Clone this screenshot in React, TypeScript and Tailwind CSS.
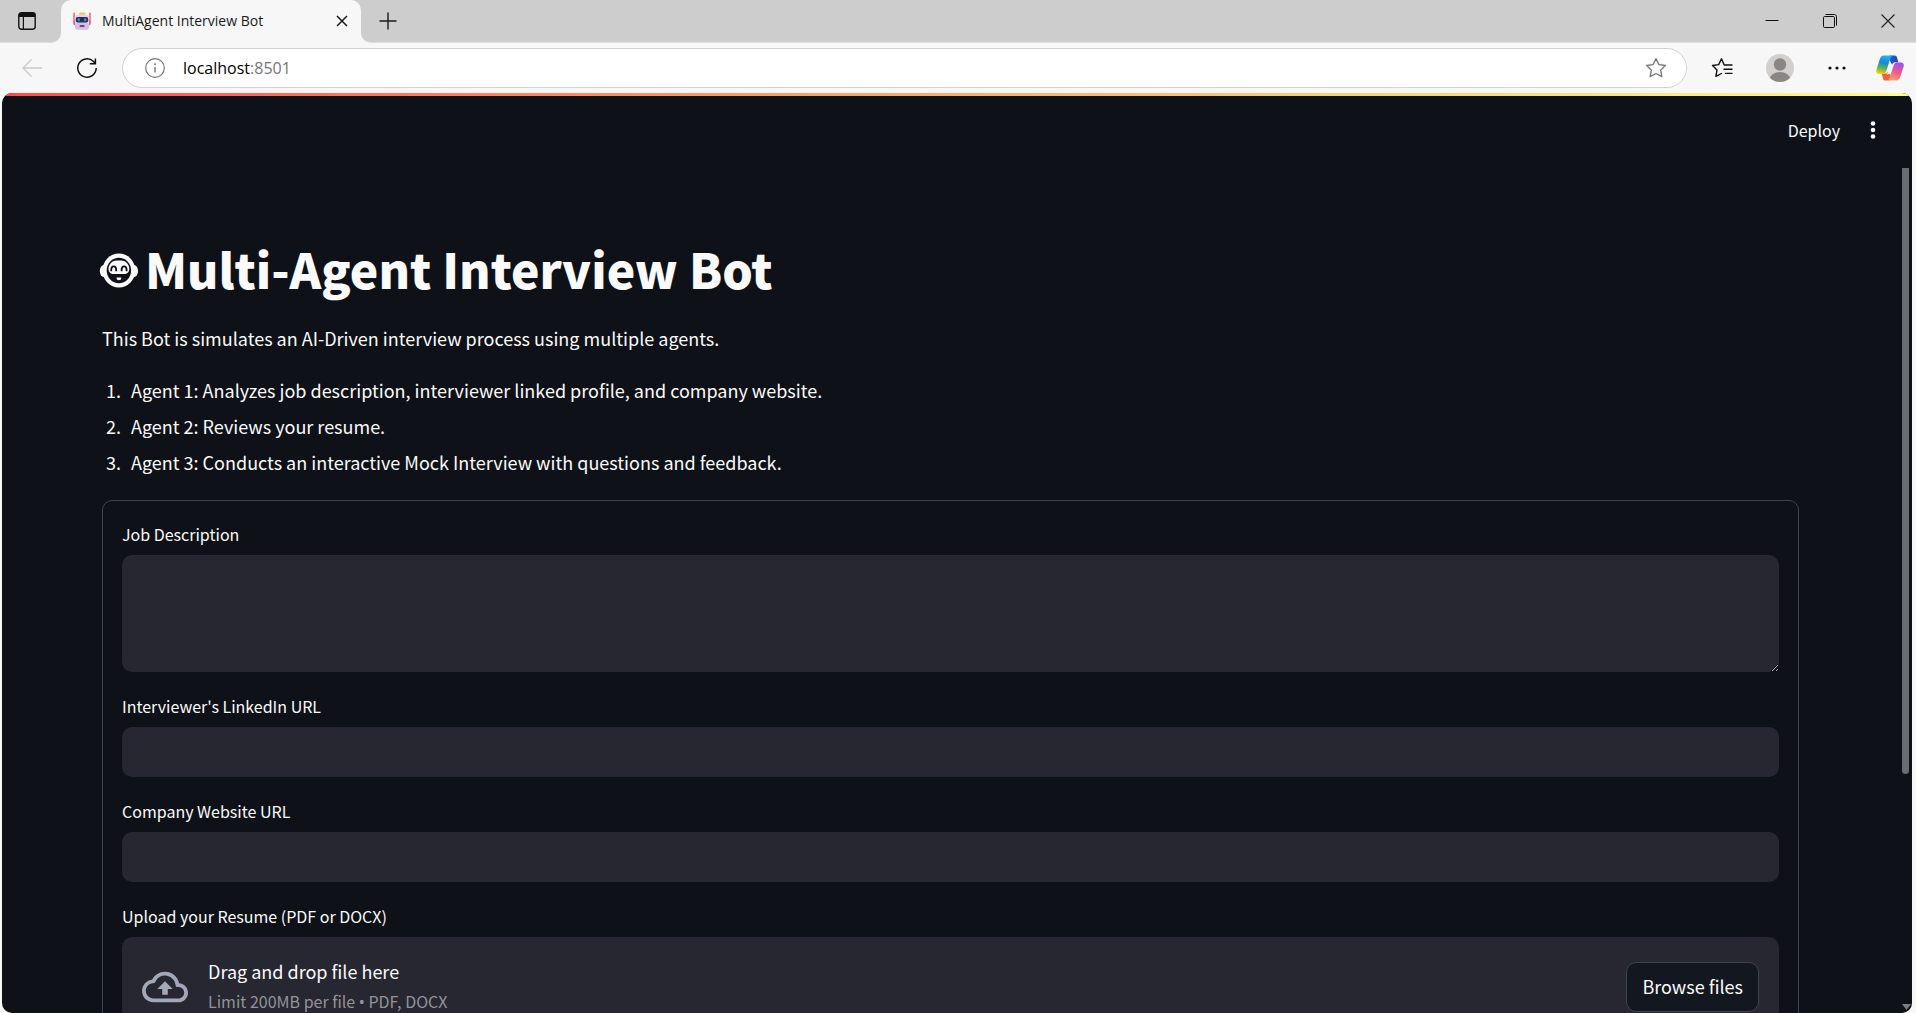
import type { ReactNode } from "react";

const AGENTS = [
  "Agent 1: Analyzes job description, interviewer linked profile, and company website.",
  "Agent 2: Reviews your resume.",
  "Agent 3: Conducts an interactive Mock Interview with questions and feedback.",
];

function IconButton({ label, className, children }: { label: string; className: string; children: ReactNode }) {
  return (
    <button type="button" aria-label={label} className={`flex shrink-0 items-center justify-center ${className}`}>
      {children}
    </button>
  );
}

function RobotIcon() {
  return (
    <svg width="18" height="18" viewBox="0 0 18 18" className="shrink-0" aria-hidden="true">
      <rect x="0.4" y="0.5" width="1.3" height="8" rx="0.6" fill="#f0436b" />
      <rect x="16.3" y="0.5" width="1.3" height="8" rx="0.6" fill="#f0436b" />
      <rect x="0.4" y="8" width="2.4" height="5" rx="1.1" fill="#e8396a" />
      <rect x="15.2" y="8" width="2.4" height="5" rx="1.1" fill="#e8396a" />
      <rect x="6" y="0.4" width="6.4" height="3.4" rx="1.2" fill="#fcc43e" />
      <rect x="1.8" y="2.4" width="14.4" height="15.4" rx="4" fill="#e3d6f2" />
      <rect x="1.8" y="10.4" width="14.4" height="7.4" rx="3.6" fill="#d3bdec" />
      <rect x="2.8" y="5" width="12.4" height="5.6" rx="2" fill="#2b2c4e" />
      <rect x="4.6" y="6.2" width="2.4" height="3" rx="1" fill="#2795d6" />
      <rect x="11" y="6.2" width="2.4" height="3" rx="1" fill="#2795d6" />
      <rect x="6.6" y="13.2" width="5" height="1.6" rx="0.8" fill="#35284d" />
    </svg>
  );
}

function CopilotIcon() {
  return (
    <svg width="28" height="28" viewBox="0 0 28 28" aria-hidden="true">
      <defs>
        <linearGradient id="cpLeft" x1="0.6" y1="0" x2="0.35" y2="1">
          <stop offset="0" stopColor="#22b4f4" />
          <stop offset="0.4" stopColor="#1b86d8" />
          <stop offset="0.7" stopColor="#55b557" />
          <stop offset="1" stopColor="#ffcb05" />
        </linearGradient>
        <linearGradient id="cpRight" x1="0.7" y1="0" x2="0.3" y2="1">
          <stop offset="0" stopColor="#a052ee" />
          <stop offset="0.5" stopColor="#f0588e" />
          <stop offset="1" stopColor="#ffa26b" />
        </linearGradient>
        <linearGradient id="cpTop" x1="0" y1="0" x2="1" y2="0.6">
          <stop offset="0" stopColor="#1b6fe0" />
          <stop offset="1" stopColor="#1f3fb8" />
        </linearGradient>
      </defs>
      <path d="M14 1.400h4.600c1.400 0 2 .8 2.400 2.200l1.300 5H19c-1.600 0-2.400.8-2.900 2.200L13 5z" fill="url(#cpTop)" />
      <path d="M14 26.600H9.400c-1.400 0-2-.8-2.400-2.200l-1.300-4.800H9c1.600 0 2.400-.8 2.900-2.200l3.100 4z" fill="#f0603c" />
      <path d="M18.200 8.600h3.200l-5.200 11-5.600.8z" fill="#f7f7f7" />
      <path d="M7.800 1.400h9.400c-1.600 0-2.400 1.400-3 3.300l-3.900 12.400c-.6 1.700-1.700 2.900-3.600 2.900H3.100c-2.700 0-3.300-2-2.600-4.500L3.900 4.900C4.600 2.700 5.700 1.400 7.800 1.400z" fill="url(#cpLeft)" />
      <path d="M20.200 26.600h-9.400c1.600 0 2.400-1.400 3-3.300l3.900-12c.6-1.700 1.700-2.700 3.600-2.700h3.600c2.700 0 3.300 2 2.600 4.500l-3.400 10c-.7 2.200-1.800 3.500-3.900 3.500z" fill="url(#cpRight)" />
    </svg>
  );
}

function TitleFace() {
  return (
    <svg width="40" height="35" viewBox="0 0 40 35" className="mt-1 shrink-0" aria-hidden="true">
      <ellipse cx="4.800" cy="18" rx="4" ry="6" fill="#fafafa" />
      <ellipse cx="35" cy="18" rx="4" ry="6" fill="#fafafa" />
      <ellipse cx="19.900" cy="17.500" rx="16.400" ry="17" fill="#fafafa" />
      <ellipse cx="19.900" cy="17.500" rx="12.200" ry="12.800" fill="#0e1117" />
      <path d="M12.600 9.200c2.200-1.900 4.900-1.800 7.300-1.800s5.100-.1 7.300 1.800c1.900 1.700 3.100 4.200 3.100 6.600 0 3.600-2.400 5.200-5.100 5.200h-10.600c-2.700 0-5.100-1.600-5.100-5.200 0-2.400 1.200-4.900 3.100-6.600z" fill="#fafafa" />
      <path d="M12.200 17.400c0-5.400 5-5.400 5 0M22.600 17.400c0-5.400 5-5.400 5 0" fill="none" stroke="#0e1117" strokeWidth="1.900" strokeLinecap="round" />
      <path d="M17.600 24.600h4.600v1c0 2.200-4.600 2.200-4.600 0z" fill="#fafafa" />
    </svg>
  );
}

function TabStrip() {
  return (
    <div className="flex h-[43px] shrink-0 font-['Open_Sans',sans-serif]">
      <div className="flex w-[61px] items-center rounded-br-[10px] border-b border-[#dedede] bg-[#cdcdcd] pl-[18px]">
        <IconButton label="Tab actions" className="size-[18px]">
          <svg width="18" height="18" viewBox="0 0 18 18" aria-hidden="true">
            <rect x="0.8" y="0.8" width="16.400" height="16.400" rx="2.600" fill="none" stroke="#111" strokeWidth="1.400" />
            <path d="M0.800 5V3.200C.800 1.600 1.800.800 3.200.800h11.600c1.400 0 2.400.800 2.400 2.400V5z" fill="#111" />
            <path d="M5.400 5v12" stroke="#111" strokeWidth="1.200" />
          </svg>
        </IconButton>
      </div>
      <div className="w-[300px] bg-[#cdcdcd]">
        <div className="flex h-full items-center rounded-t-[10px] bg-[#f7f7f7] pr-[13px] pb-px pl-3">
          <RobotIcon />
          <span className="ml-[11px] flex-1 text-sm text-[#1a1a1a]">MultiAgent Interview Bot</span>
          <IconButton label="Close tab" className="size-3">
            <svg width="12" height="12" viewBox="0 0 12 12" fill="none" stroke="#1a1a1a" strokeWidth="1.500" aria-hidden="true">
              <path d="M1 1l10 10M11 1L1 11" />
            </svg>
          </IconButton>
        </div>
      </div>
      <div className="flex flex-1 items-center justify-between rounded-bl-[10px] border-b border-[#dedede] bg-[#cdcdcd] pr-[21px] pl-[18px]">
        <IconButton label="New tab" className="size-[18px]">
          <svg width="18" height="18" viewBox="0 0 18 18" fill="none" stroke="#1a1a1a" strokeWidth="1.400" aria-hidden="true">
            <path d="M9 0.500v17M0.500 9h17" />
          </svg>
        </IconButton>
        <div className="flex items-center gap-11">
          <IconButton label="Minimize" className="size-[14px]">
            <svg width="14" height="14" viewBox="0 0 14 14" fill="none" stroke="#111" aria-hidden="true">
              <path d="M0.500 6.500h13" />
            </svg>
          </IconButton>
          <IconButton label="Restore" className="size-[14px]">
            <svg width="14" height="14" viewBox="0 0 14 14" fill="none" stroke="#111" aria-hidden="true">
              <rect x="0.500" y="2.500" width="11" height="11" rx="1.200" />
              <path d="M2.500 0.500h8.800c1.300 0 2.200.900 2.200 2.200v8.800" />
            </svg>
          </IconButton>
          <IconButton label="Close window" className="size-[14px]">
            <svg width="14" height="14" viewBox="0 0 14 14" fill="none" stroke="#222" strokeWidth="1.100" aria-hidden="true">
              <path d="M0.500 0.500l13 13M13.500 0.500l-13 13" />
            </svg>
          </IconButton>
        </div>
      </div>
    </div>
  );
}

function Toolbar() {
  return (
    <div className="flex h-[50px] shrink-0 items-center pr-3 pl-[22px] font-['Open_Sans',sans-serif]">
      <IconButton label="Back" className="size-5">
        <svg width="20" height="18" viewBox="0 0 20 18" fill="none" stroke="#c9c9c9" strokeWidth="1.300" aria-hidden="true">
          <path d="M20 9H1M9.500 0.500L1 9l8.500 8.500" />
        </svg>
      </IconButton>
      <IconButton label="Refresh" className="ml-[35px] size-5">
        <svg width="20" height="20" viewBox="0 0 20 20" fill="none" stroke="#111" strokeWidth="1.500" aria-hidden="true">
          <path d="M19.200 10a9.200 9.200 0 1 1-2.700-6.500L18.300 5.400M18.400 0.400v5.400h-5.600" />
        </svg>
      </IconButton>
      <div className="ml-[25px] flex h-10 flex-1 items-center rounded-full border border-[#d2d2d2] bg-white pr-[19px] pl-[22px]">
        <svg width="20" height="20" viewBox="0 0 20 20" className="shrink-0" aria-hidden="true">
          <circle cx="10" cy="10" r="9.300" fill="none" stroke="#767676" strokeWidth="1.200" />
          <path d="M10 9v5.500" stroke="#767676" strokeWidth="1.400" />
          <circle cx="10" cy="6.200" r="1" fill="#767676" />
        </svg>
        <div className="ml-[18px] flex-1 text-base text-[#767676]">
          <span className="text-black">localhost</span>:8501
        </div>
        <IconButton label="Add to favorites" className="size-[22px]">
          <svg width="22" height="22" viewBox="0 0 22 22" fill="none" stroke="#767676" strokeWidth="1.300" strokeLinejoin="round" aria-hidden="true">
            <path d="M11 1.600l2.900 6 6.500.900-4.700 4.600 1.100 6.500L11 16.500l-5.800 3.100 1.100-6.500L1.600 8.500l6.500-.900z" />
          </svg>
        </IconButton>
      </div>
      <IconButton label="Favorites" className="ml-6 size-[22px]">
        <svg width="22" height="22" viewBox="0 0 22 22" fill="none" stroke="#111" strokeWidth="1.400" strokeLinejoin="round" strokeLinecap="round" aria-hidden="true">
          <path d="M14 8h-0.800L10.500 1.800 7.700 7.600l-6.200.900 4.500 4.400-1.100 6.500L10.500 16.500M14 8h7M13 12.200h8M14.500 16.400H21" />
        </svg>
      </IconButton>
      <IconButton label="Profile" className="ml-[33px] size-7">
        <svg width="28" height="28" viewBox="0 0 28 28" aria-hidden="true">
          <defs>
            <clipPath id="avatarClip">
              <circle cx="14" cy="14" r="14" />
            </clipPath>
          </defs>
          <g clipPath="url(#avatarClip)">
            <rect width="28" height="28" fill="#d2d0ce" />
            <circle cx="14" cy="10.500" r="6.200" fill="#8a8684" />
            <ellipse cx="14" cy="26" rx="10.500" ry="8" fill="#8a8684" />
          </g>
        </svg>
      </IconButton>
      <IconButton label="Settings and more" className="ml-[34px] size-[18px]">
        <svg width="18" height="4" viewBox="0 0 18 4" fill="#111" aria-hidden="true">
          <circle cx="2" cy="2" r="1.600" />
          <circle cx="9" cy="2" r="1.600" />
          <circle cx="16" cy="2" r="1.600" />
        </svg>
      </IconButton>
      <IconButton label="Copilot" className="ml-[30px] size-7">
        <CopilotIcon />
      </IconButton>
    </div>
  );
}

const labelClass = "mb-[9px] text-base leading-6";
const fieldClass = "block w-full rounded-[10px] bg-[#262730] px-4 text-lg text-[#fafafa] outline-none";

function InterviewForm() {
  return (
    <form className="mt-5 flex flex-col gap-[22px] rounded-[10px] border border-[#41444c] px-[19px] pt-[21px] pb-5">
      <div className="flex flex-col">
        <label htmlFor="job" className={labelClass}>Job Description</label>
        <textarea id="job" className={`${fieldClass} h-[117px] resize-y py-3`} />
      </div>
      <div className="flex flex-col">
        <label htmlFor="linkedin" className={labelClass}>Interviewer's LinkedIn URL</label>
        <input id="linkedin" type="text" className={`${fieldClass} h-[50px]`} />
      </div>
      <div className="flex flex-col">
        <label htmlFor="website" className={labelClass}>Company Website URL</label>
        <input id="website" type="text" className={`${fieldClass} h-[50px]`} />
      </div>
      <div className="flex flex-col">
        <label htmlFor="resume" className={labelClass}>Upload your Resume (PDF or DOCX)</label>
        <div className="flex items-center rounded-[10px] bg-[#262730] p-5">
          <svg width="46" height="46" viewBox="0 0 24 24" fill="#a3a8b8" className="shrink-0" aria-hidden="true">
            <path d="M19.350 10.040A7.490 7.490 0 0 0 12 4C9.110 4 6.600 5.640 5.350 8.040A5.994 5.994 0 0 0 0 14c0 3.310 2.690 6 6 6h13c2.760 0 5-2.240 5-5 0-2.640-2.050-4.780-4.650-4.960zM19 18H6c-2.210 0-4-1.790-4-4 0-2.050 1.530-3.760 3.560-3.970l1.070-.110.500-.950A5.469 5.469 0 0 1 12 6c2.620 0 4.880 1.860 5.390 4.430l.300 1.500 1.530.110A2.980 2.980 0 0 1 22 15c0 1.650-1.350 3-3 3zM8 13h2.550v3h2.900v-3H16l-4-4z" />
          </svg>
          <div className="ml-5 flex flex-1 flex-col gap-1 pb-0.5">
            <span className="text-lg leading-7">Drag and drop file here</span>
            <span className="text-base leading-6 text-[#93949a]">
              Limit 200MB per file <span className="font-['Noto_Sans',sans-serif]">•</span> PDF, DOCX
            </span>
          </div>
          <button id="resume" type="button" className="h-[50px] rounded-[10px] border border-[#41444c] bg-[#131720] px-[15px] pb-0.5 text-lg">
            Browse files
          </button>
        </div>
      </div>
    </form>
  );
}

export default function App() {
  return (
    <div className="flex h-screen flex-col overflow-hidden bg-[#f7f7f7]">
      <TabStrip />
      <Toolbar />
      <div className="mr-1 ml-0.5 flex min-h-0 flex-1 flex-col overflow-hidden rounded-[10px] bg-[#0e1117] font-['Noto_Sans_CJK_SC',sans-serif] text-[#fafafa]">
        <div className="h-[3px] shrink-0 bg-linear-to-r from-[#ff4b4b] to-[#fffd80]" />
        <header className="flex h-[72px] shrink-0 items-center justify-end pr-[29px] pb-1">
          <button type="button" className="text-base">Deploy</button>
          <IconButton label="Main menu" className="ml-[23px] size-5">
            <svg width="6" height="18" viewBox="0 0 6 18" fill="#fafafa" aria-hidden="true">
              <circle cx="3" cy="2.500" r="2.300" />
              <circle cx="3" cy="9" r="2.300" />
              <circle cx="3" cy="15.500" r="2.300" />
            </svg>
          </IconButton>
        </header>
        <div className="flex min-h-0 flex-1">
          <main className="min-w-0 flex-1 overflow-hidden pt-[67px] pr-[103px] pl-[100px]">
            <h1 className="-ml-[3px] flex items-center gap-[6px] text-[48px] leading-[66px] font-black">
              <TitleFace />
              Multi-Agent Interview Bot
            </h1>
            <p className="mt-[22px] text-lg leading-[30px]">
              This Bot is simulates an AI-Driven interview process using multiple agents.
            </p>
            <ol className="mt-[19px] list-decimal pl-[23px] text-lg leading-9">
              {AGENTS.map((agent) => (
                <li key={agent} className="pl-[6px]">{agent}</li>
              ))}
            </ol>
            <InterviewForm />
          </main>
          <div className="flex w-[10px] shrink-0 flex-col items-start justify-between pb-[3px]" aria-hidden="true">
            <div className="h-[72%] w-[7px] rounded-b-full bg-[#6b6c70]" />
            <svg width="9" height="6" viewBox="0 0 9 6" fill="#7c7d81">
              <path d="M0 0h9L4.500 6z" />
            </svg>
          </div>
        </div>
      </div>
    </div>
  );
}
